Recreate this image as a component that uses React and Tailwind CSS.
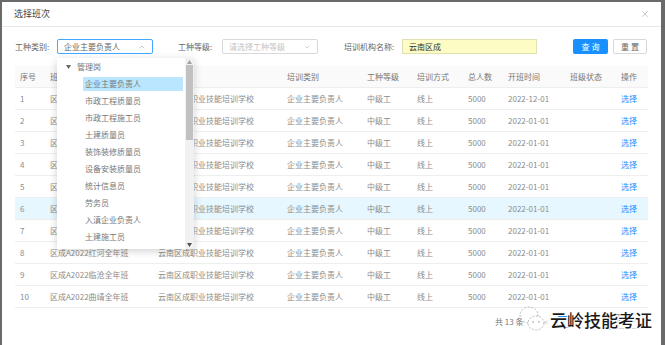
import React from "react";
import { X, ChevronUp, ChevronDown } from "lucide-react";

const rows = [
  { no: 1, name: "区成A2022昆明全年班", date: "2022-12-01" },
  { no: 2, name: "区成A2022玉溪全年班", date: "2022-01-01" },
  { no: 3, name: "区成A2022大理全年班", date: "2022-01-01" },
  { no: 4, name: "区成A2022丽江全年班", date: "2022-01-01" },
  { no: 5, name: "区成A2022保山全年班", date: "2022-01-01" },
  { no: 6, name: "区成A2022楚雄全年班", date: "2022-01-01", active: true },
  { no: 7, name: "区成A2022文山全年班", date: "2022-01-01" },
  { no: 8, name: "区成A2022红河全年班", date: "2022-01-01" },
  { no: 9, name: "区成A2022临沧全年班", date: "2022-01-01" },
  { no: 10, name: "区成A2022曲靖全年班", date: "2022-01-01" },
];

const items = [
  "企业主要负责人",
  "市政工程质量员",
  "市政工程施工员",
  "土建质量员",
  "装饰装修质量员",
  "设备安装质量员",
  "统计信息员",
  "劳务员",
  "入滇企业负责人",
  "土建施工员",
];

const cols = "grid grid-cols-[30px_108px_129px_80px_50px_51px_40px_62px_51px_32px] px-[5px]";

const App = () => {
  return (
    <div className="w-[665px] h-[345px] overflow-hidden bg-[#6a6a6a] pt-[2px] pl-[2px] font-['Noto_Sans_CJK_SC','Liberation_Sans',sans-serif]">
      <div className="relative w-[659px] h-[343px] bg-white">
        {/* header */}
        <div className="h-[25px] border-b border-[#e8e8e8] flex items-center justify-between pl-[12px] pr-[11px]">
          <span className="text-[9px] text-[#444]">选择班次</span>
          <X size={10} strokeWidth={1.5} className="text-[#aaa]" />
        </div>

        {/* filters */}
        <div className="flex items-center mt-[12px] pl-[13px] h-[15px] text-[8px] text-[#666] leading-none">
          <span className="w-[42px]">工种类别:</span>
          <div className="w-[96px] h-[15px] border border-[#40a9ff] rounded-[2px] flex items-center justify-between px-[6px] text-[#666]">
            <span>企业主要负责人</span>
            <ChevronUp size={8} className="text-[#aaa]" />
          </div>
          <span className="ml-[25px] w-[44px]">工种等级:</span>
          <div className="w-[96px] h-[15px] border border-[#d9d9d9] rounded-[2px] flex items-center justify-between px-[6px] text-[#c4c4c4]">
            <span>请选择工种等级</span>
            <ChevronDown size={8} className="text-[#bbb]" />
          </div>
          <span className="ml-[26px] w-[58px]">培训机构名称:</span>
          <div className="w-[135px] h-[15px] border border-[#e0e0b0] bg-[#fcfcc4] flex items-center px-[6px] text-[#333]">
            云南区成
          </div>
          <button className="ml-[36px] w-[35px] h-[15px] bg-[#1890ff] text-white rounded-[2px] text-[8px]">
            查 询
          </button>
          <button className="ml-[5px] w-[34px] h-[15px] border border-[#d9d9d9] text-[#666] rounded-[2px] text-[8px]">
            重 置
          </button>
        </div>

        {/* table */}
        <div className="mt-[12px] ml-[13px] w-[633px] text-[8px] leading-none">
          <div className={`${cols} h-[22px] items-center bg-[#fafafa] border-b border-[#eee] text-[#777]`}>
            <span>序号</span>
            <span>班级名称</span>
            <span>培训机构</span>
            <span>培训类别</span>
            <span>工种等级</span>
            <span>培训方式</span>
            <span>总人数</span>
            <span>开班时间</span>
            <span>班级状态</span>
            <span>操作</span>
          </div>
          {rows.map((r) => (
            <div
              key={r.no}
              className={`${cols} h-[22px] items-center border-b border-[#eee] text-[#8c8c8c] ${r.active ? "bg-[#e6f7ff]" : ""}`}
            >
              <span>{r.no}</span>
              <span>{r.name}</span>
              <span>云南区成职业技能培训学校</span>
              <span>企业主要负责人</span>
              <span>中级工</span>
              <span>线上</span>
              <span>5000</span>
              <span>{r.date}</span>
              <span></span>
              <span className="text-[#1890ff]">选择</span>
            </div>
          ))}
        </div>

        {/* pagination */}
        <div className="flex items-center mt-[6px] pl-[493px] h-[15px] text-[8px] leading-none text-[#777]">
          <span className="w-[44px]">共 13 条</span>
          <span className="w-[14px] text-center text-[#bbb]">&lt;</span>
          <span className="ml-[4px] w-[13px] h-[12px] border border-[#1890ff] text-[#1890ff] flex items-center justify-center rounded-[2px]">1</span>
          <span className="w-[12px] text-center">2</span>
          <span className="w-[12px] text-center">&gt;</span>
          <div className="ml-[3px] w-[46px] h-[15px] border border-[#d9d9d9] rounded-[2px] flex items-center justify-between px-[5px]">
            <span>10 条/页</span>
            <ChevronDown size={7} className="text-[#aaa]" />
          </div>
        </div>

        {/* dropdown tree */}
        <div className="absolute left-[55px] top-[56px] w-[137px] h-[191px] bg-white shadow-[0_2px_8px_rgba(0,0,0,0.18)] flex text-[8px] leading-none text-[#777]">
          <div className="flex-1 flex flex-col">
            <div className="h-[17px] flex items-center pl-[9px]">
              <svg width="5" height="4" viewBox="0 0 5 4" className="mr-[6px]">
                <path d="M0 0 L5 0 L2.5 4 Z" fill="#666" />
              </svg>
              <span>管理岗</span>
            </div>
            {items.map((it, i) => (
              <div key={it} className="h-[17px] flex items-center pl-[26px]">
                <span className={`h-[14px] w-[100px] flex items-center pl-[2px] ${i === 0 ? "bg-[#bae7ff]" : ""}`}>
                  {it}
                </span>
              </div>
            ))}
          </div>
          <div className="w-[9px] bg-[#f1f1f1] flex flex-col items-center">
            <svg width="5" height="4" viewBox="0 0 5 4" className="mt-[2px]">
              <path d="M0 4 L5 4 L2.5 0 Z" fill="#a0a0a0" />
            </svg>
            <div className="w-[7px] h-[75px] bg-[#c1c1c1] mt-[1px]" />
            <div className="flex-1" />
            <svg width="5" height="4" viewBox="0 0 5 4" className="mb-[2px]">
              <path d="M0 0 L5 0 L2.5 4 Z" fill="#505050" />
            </svg>
          </div>
        </div>

        {/* watermark */}
        <div className="absolute left-[516px] top-[302px] flex items-center gap-[4px]">
          <svg width="28" height="30" viewBox="0 0 28 30" fill="none" stroke="#bbb" strokeWidth="1" strokeDasharray="2 1.5">
            <ellipse cx="11" cy="11" rx="9" ry="8" />
            <ellipse cx="18" cy="19" rx="8" ry="7" fill="white" />
            <circle cx="15" cy="18" r="0.8" fill="#999" stroke="none" />
            <circle cx="21" cy="18" r="0.8" fill="#999" stroke="none" />
          </svg>
          <span className="text-[17px] leading-none text-[#1a1a1a] font-medium [text-shadow:1px_1px_0_#fff,-1px_-1px_0_#fff,1px_-1px_0_#fff,-1px_1px_0_#fff,0_1px_0_#fff,0_-1px_0_#fff]">
            云岭技能考证
          </span>
        </div>
      </div>
    </div>
  );
};

export default App;
